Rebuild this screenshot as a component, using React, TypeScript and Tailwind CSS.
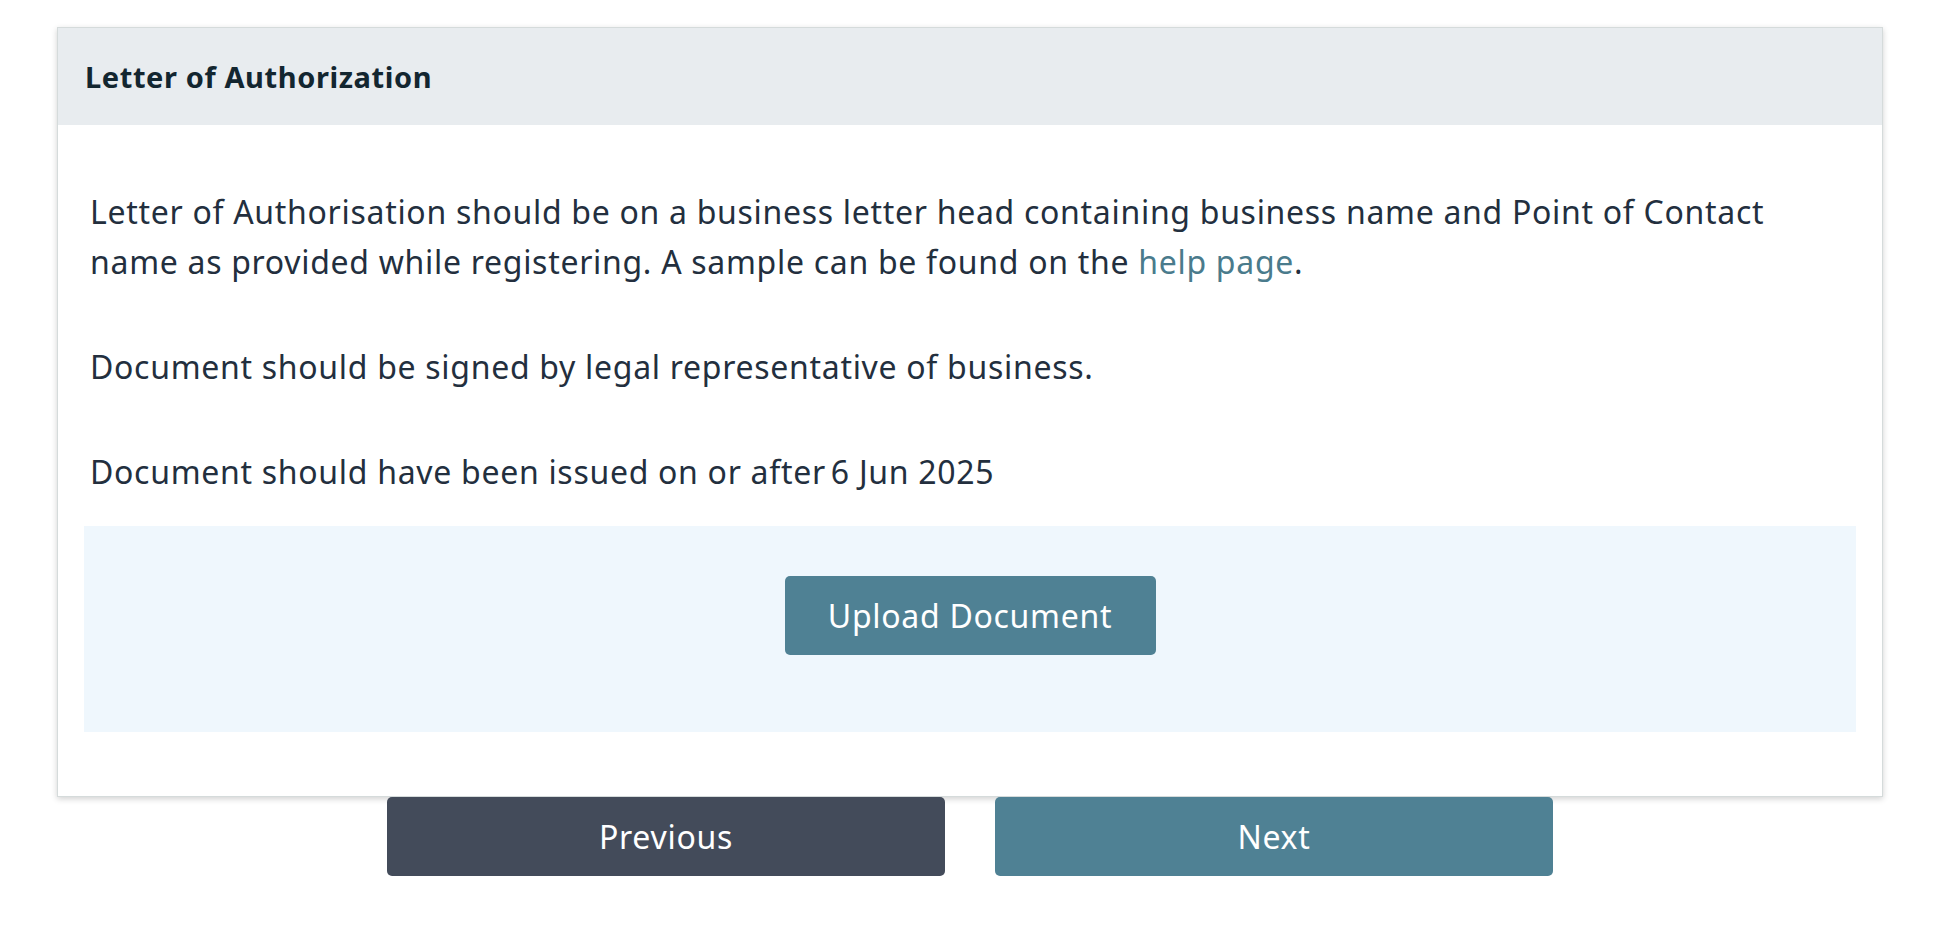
import React from "react";

export default function App() {
  return (
    <div className="min-h-screen bg-white pt-[27px]" style={{ fontFamily: '"Noto Sans", "Open Sans", sans-serif' }}>
      <div className="ml-[57px] w-[1826px] border border-[#d5dbdb] bg-white shadow-[0_2px_6px_rgba(0,0,0,0.18)]">
        <div className="flex h-[97px] items-center bg-[#e8ecef] px-[27px]">
          <h2 className="text-[29px] font-bold tracking-[0.6px] text-[#132630]">Letter of Authorization</h2>
        </div>
        <div className="px-[26px] pb-[64px] pt-[62px] text-[32px] leading-[50px] tracking-[0.7px] text-[#232f3e]">
          <div className="px-[6px]">
            <p>
              Letter of Authorisation should be on a business letter head containing business name and Point of Contact
              name as provided while registering. A sample can be found on the{" "}
              <a className="text-[#4a7b8c]">help page</a>.
            </p>
            <p className="mt-[55px]">Document should be signed by legal representative of business.</p>
            <p className="mt-[55px]">
              Document should have been issued on or after<span className="ml-[5px]">6 Jun 2025</span>
            </p>
          </div>
          <div className="mt-[29px] flex h-[206px] justify-center bg-[#eff7fd] pt-[50px]">
            <button className="h-[79px] w-[371px] rounded-[5px] bg-[#4f8194] text-[32px] tracking-[0.7px] text-white">
              Upload Document
            </button>
          </div>
        </div>
      </div>
      <div className="ml-[57px] flex w-[1826px] justify-center gap-[50px]">
        <button className="h-[79px] w-[558px] rounded-[5px] bg-[#434b5a] text-[32px] tracking-[0.7px] text-white">
          Previous
        </button>
        <button className="h-[79px] w-[558px] rounded-[5px] bg-[#4f8194] text-[32px] tracking-[0.7px] text-white">
          Next
        </button>
      </div>
    </div>
  );
}
